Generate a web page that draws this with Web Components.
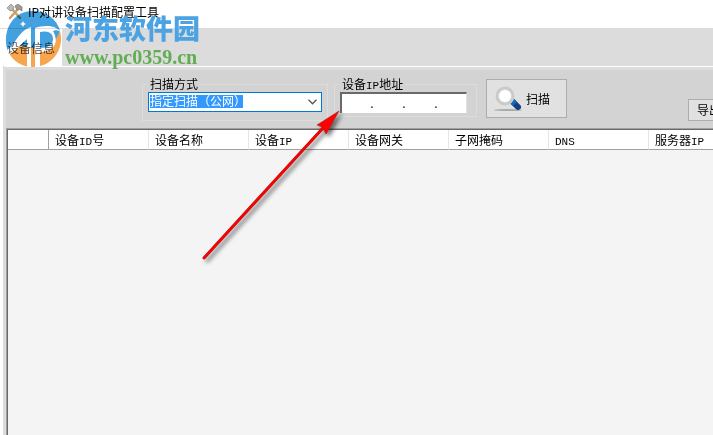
<!DOCTYPE html>
<html lang="zh-CN">
<head>
<meta charset="utf-8">
<title>IP对讲设备扫描配置工具</title>
<style>
  html, body {
    height: 100%;
    margin: 0;
    overflow: hidden;
  }
  body {
    background: #fff;
    color: #000;
    font: 12px/16px "Noto Sans CJK SC", sans-serif;
  }
</style>
</head>
<body>
<scanner-window></scanner-window>

<template id="scanner-window">
  <style>
    :host {
      display: flex;
      flex-direction: column;
      height: 100%;
      position: relative;
      overflow: hidden;
    }
    header {
      display: flex;
      align-items: center;
      gap: 5px;
      height: 28px;
      box-sizing: border-box;
      padding: 0 0 4px 7px;
    }
    h1 {
      margin: 0;
      font-size: 12px;
      font-weight: normal;
    }
    nav {
      display: flex;
      height: 38px;
      background: #dcdcdc;
    }
    nav button {
      width: 62px;
      padding: 0;
      border: 0;
      border-top: 1px solid #dcdcdc;
      background: #fff;
      color: #555;
      font: inherit;
    }
    main {
      flex: 1;
      display: flex;
      flex-direction: column;
      margin-left: 3px;
      border-top: 1px solid #fff;
      border-left: 3px solid #dcdcdc;
      background: #d3d3d3;
      min-height: 0;
    }
    .tools {
      display: flex;
      align-items: flex-start;
      height: 61px;
      box-sizing: border-box;
      border-top: 3px solid #dcdcdc;
      padding: 6px 0 0 136px;
    }
    .tools > * {
      flex: none;
    }
    group-box + group-box {
      margin-left: 6px;
    }
    small {
      font: 11px "Liberation Mono", monospace;
    }
    .scan {
      margin: 3px 0 0 9px;
    }
    .export {
      margin: 23px -55px 0 auto;
    }
    device-table {
      flex: 1;
    }
    site-mark {
      position: absolute;
      left: 4px;
      top: 10px;
    }
    pointer-arrow {
      position: absolute;
      left: 195px;
      top: 105px;
    }
  </style>
  <header>
    <svg width="16" height="16" viewBox="0 0 16 16" aria-hidden="true">
      <path d="M3 14 11 5M5 5l8 9" stroke="#c9a06c" stroke-width="2.4" stroke-linecap="round"/>
      <path d="M1 3 4 0l3 3-1 3-3 1-3-3z" fill="#b9bab8" stroke="#8a867f" stroke-width=".7"/>
      <path d="m8 2 3-2 4 3v4l-3-2-2 1z" fill="#a09c96" stroke="#77726b" stroke-width=".7"/>
    </svg>
    <h1>IP对讲设备扫描配置工具</h1>
  </header>
  <nav><button type="button">设备信息</button></nav>
  <main>
    <div class="tools">
      <group-box label="扫描方式"><scan-mode></scan-mode></group-box>
      <group-box compact><span slot="label">设备<small>IP</small>地址</span><ip-field></ip-field></group-box>
      <tool-button class="scan" large>
        <svg slot="icon" width="30" height="28" viewBox="0 0 30 28" aria-hidden="true">
          <ellipse cx="14" cy="25" rx="14" ry="1" fill="#aaa"/>
          <path d="m19 17 5 5" stroke="#123f86" stroke-width="6" stroke-linecap="round"/>
          <path d="m17 15 4 4" stroke="#1668b0" stroke-width="6"/>
          <circle cx="11" cy="11" r="8" fill="#e8e8e8" stroke="#c9cbca" stroke-width="3"/>
          <circle cx="11" cy="11" r="6" fill="#fff"/>
        </svg>
        扫描
      </tool-button>
      <tool-button class="export">导出</tool-button>
    </div>
    <device-table></device-table>
  </main>
  <site-mark></site-mark>
  <pointer-arrow></pointer-arrow>
</template>

<template id="group-box">
  <style>
    :host { display: block; }
    fieldset {
      margin: 0;
      min-width: 0;
      border: 1px solid #dcdcdc;
      padding: 0 5px 8px;
    }
    :host([compact]) fieldset { padding: 0 9px 3px 5px; }
    legend {
      padding: 0 2px;
      margin: 0;
      height: 16px;
      line-height: 16px;
    }
  </style>
  <fieldset>
    <legend><slot name="label"></slot></legend>
    <slot></slot>
  </fieldset>
</template>

<template id="scan-mode">
  <style>
    :host { display: grid; width: 174px; }
    select, svg { grid-area: 1 / 1; }
    select {
      appearance: none;
      height: 20px;
      box-sizing: border-box;
      margin: 0;
      border: 1px solid #0078d7;
      border-radius: 0;
      padding: 0 18px 2px 1px;
      background: linear-gradient(#3399ff, #3399ff) 1px 2px / 93px 13px no-repeat #fff;
      color: #fff;
      font: inherit;
    }
    option { background: #fff; color: #000; }
    svg {
      place-self: center end;
      margin-right: 5px;
      pointer-events: none;
    }
  </style>
  <select aria-label="扫描方式"><option>指定扫描（公网）</option></select>
  <svg width="9" height="6" viewBox="0 0 9 6"><path d="m.5.8 4 4 4-4" fill="none" stroke="#555" stroke-width="1.3"/></svg>
</template>

<template id="ip-field">
  <style>
    :host {
      display: flex;
      width: 127px;
      height: 21px;
      box-sizing: border-box;
      border: solid #696969;
      border-width: 2px 0 0 2px;
      border-right: 1px solid #e3e3e3;
      background: #fff;
    }
    input {
      flex: 1;
      width: 0;
      min-width: 0;
      border: 0;
      padding: 0;
      outline: 0;
      background: none;
      text-align: center;
      font: inherit;
    }
    input:first-child { margin-right: -6px; }
    span { width: 4px; line-height: 18px; text-align: center; }
  </style>
  <input aria-label="IP 1"><span>.</span><input aria-label="IP 2"><span>.</span><input aria-label="IP 3"><span>.</span><input aria-label="IP 4">
</template>

<template id="tool-button">
  <style>
    :host { display: block; }
    button {
      display: flex;
      align-items: center;
      width: 80px;
      height: 22px;
      box-sizing: border-box;
      margin: 0;
      border: 1px solid #adadad;
      padding: 0 8px;
      background: #e1e1e1;
      color: #000;
      font: inherit;
    }
    :host([large]) button {
      width: 81px;
      height: 39px;
      gap: 2px;
      padding: 0 7px;
    }
    button:hover { border-color: #0078d7; }
  </style>
  <button type="button"><slot name="icon"></slot><slot></slot></button>
</template>

<template id="device-table">
  <style>
    :host {
      display: block;
      overflow: hidden;
      border-top: 1px solid #a0a0a0;
      border-left: 1px solid #a0a0a0;
      background: #f4f4f4;
      box-shadow: inset 1px 1px #696969;
      padding: 1px 0 0 1px;
    }
    table {
      width: 741px;
      table-layout: fixed;
      border-collapse: separate;
      border-spacing: 0;
      background: #fff;
    }
    th {
      width: 100px;
      height: 20px;
      box-sizing: border-box;
      border-right: 1px solid #e5e5e5;
      border-bottom: 1px solid #a0a0a0;
      padding: 0 0 0 6px;
      text-align: left;
      font-weight: normal;
      white-space: nowrap;
    }
    th:first-child {
      width: 41px;
      border-right-color: #a0a0a0;
    }
    small { font: 11px "Liberation Mono", monospace; }
  </style>
  <table>
    <thead>
      <tr>
        <th></th>
        <th>设备<small>ID</small>号</th>
        <th>设备名称</th>
        <th>设备<small>IP</small></th>
        <th>设备网关</th>
        <th>子网掩码</th>
        <th><small>DNS</small></th>
        <th>服务器<small>IP</small></th>
      </tr>
    </thead>
  </table>
</template>

<template id="site-mark">
  <style>
    :host {
      display: flex;
      gap: 3px;
      pointer-events: none;
    }
    /* multiply keeps the tab label readable under the logo */
    svg { opacity: .8; mix-blend-mode: multiply; }
    div { display: flex; flex-direction: column; }
    b {
      color: #4ba3e3;
      font-size: 27px;
      font-weight: 900;
      line-height: 36px;
    }
    i {
      color: #62ad54;
      font: bold 20px/22px "Liberation Serif", serif;
    }
  </style>
  <svg width="58" height="58" viewBox="0 0 58 58" aria-hidden="true">
    <path d="M4 42C-3 22 8 1 29 1c13 0 24 8 27 20-3 12-12 19-20 21H15z" fill="#1489d8"/>
    <path d="M5 43 16 36l20 3c9-1 15-6 20-18 5 18-8 36-27 36-11 0-20-6-24-14z" fill="#f58f22"/>
    <path d="M3 40C10 37 14 21 27 17v40h-4V29C18 33 11 42 5 44z" fill="#fff"/>
    <path d="M31 18c10-3 20-3 26 4-3-2-6-2-8-1 7 12 0 21-13 21v15h-5z" fill="#fff"/>
    <path d="M36 22c8-2 13 1 13 7s-5 9-13 9z" fill="#1489d8"/>
    <path d="m19 11 1 2 2 1-2 1-1 2-1-2-2-1 2-1z" fill="#fff"/>
  </svg>
  <div><b>河东软件园</b><i>www.pc0359.cn</i></div>
</template>

<template id="pointer-arrow">
  <style>
    :host { display: block; pointer-events: none; }
    svg { display: block; filter: drop-shadow(3px 3px 2px #0008); }
  </style>
  <svg width="155" height="165" viewBox="0 0 155 165" aria-hidden="true">
    <path d="m9 153 119-130" stroke="#a11" stroke-width="3" stroke-linecap="round"/>
    <path d="m9 153 119-130" stroke="#f00" stroke-width="2" stroke-linecap="round"/>
    <path d="m144 6-22 14 5 2 1 1 3 6z" fill="#f00" stroke="#a22" stroke-width=".6"/>
  </svg>
</template>

<script>
  class TemplateElement extends HTMLElement {
    constructor() {
      super();
      const template = document.getElementById(this.localName);
      this.attachShadow({mode: 'open'}).appendChild(template.content.cloneNode(true));
    }
  }

  class GroupBox extends TemplateElement {
    connectedCallback() {
      if (this.hasAttribute('label')) {
        this.shadowRoot.querySelector('slot[name=label]').textContent = this.getAttribute('label');
      }
    }
  }

  customElements.define('group-box', GroupBox);
  ['scan-mode', 'ip-field', 'tool-button', 'device-table', 'site-mark', 'pointer-arrow', 'scanner-window'].forEach(name => {
    customElements.define(name, class extends TemplateElement {});
  });
</script>
</body>
</html>
